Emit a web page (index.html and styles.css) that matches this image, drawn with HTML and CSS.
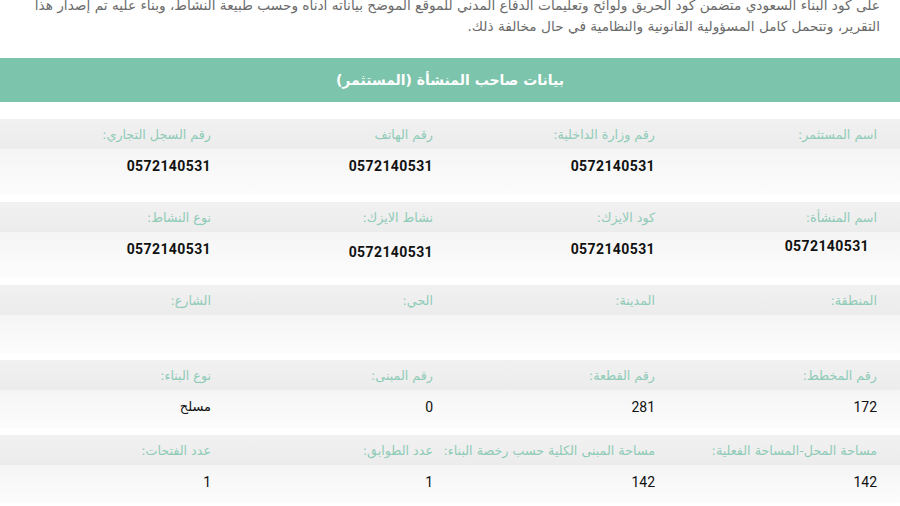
FILE: index.html
```html
<!DOCTYPE html>
<html lang="ar" dir="rtl">
<head>
<meta charset="utf-8">
<link rel="stylesheet" href="styles.css">
</head>
<body>
<div class="intro">
  <p class="line">على كود البناء السعودي متضمن كود الحريق ولوائح وتعليمات الدفاع المدني للموقع الموضح بياناته أدناه وحسب طبيعة النشاط، وبناء عليه تم إصدار هذا</p>
  <p class="line">التقرير، وتتحمل كامل المسؤولية القانونية والنظامية في حال مخالفة ذلك.</p>
</div>

<div class="section-title">بيانات صاحب المنشأة (المستثمر)</div>

<div class="group tall">
  <div class="labels">
    <span>اسم المستثمر:</span>
    <span>رقم وزارة الداخلية:</span>
    <span>رقم الهاتف</span>
    <span>رقم السجل التجاري:</span>
  </div>
  <div class="values bold">
    <span></span>
    <span>0572140531</span>
    <span>0572140531</span>
    <span>0572140531</span>
  </div>
</div>

<div class="group tall">
  <div class="labels">
    <span>اسم المنشأة:</span>
    <span>كود الايزك:</span>
    <span>نشاط الايزك:</span>
    <span>نوع النشاط:</span>
  </div>
  <div class="values bold">
    <span class="shift">0572140531</span>
    <span>0572140531</span>
    <span class="low">0572140531</span>
    <span>0572140531</span>
  </div>
</div>

<div class="group">
  <div class="labels">
    <span>المنطقة:</span>
    <span>المدينة:</span>
    <span>الحي:</span>
    <span>الشارع:</span>
  </div>
  <div class="values">
    <span></span><span></span><span></span><span></span>
  </div>
</div>

<div class="group">
  <div class="labels">
    <span>رقم المخطط:</span>
    <span>رقم القطعة:</span>
    <span>رقم المبنى:</span>
    <span>نوع البناء:</span>
  </div>
  <div class="values">
    <span>172</span>
    <span>281</span>
    <span>0</span>
    <span class="ar">مسلح</span>
  </div>
</div>

<div class="group">
  <div class="labels">
    <span>مساحة المحل-المساحة الفعلية:</span>
    <span>مساحة المبنى الكلية حسب رخصة البناء:</span>
    <span>عدد الطوابق:</span>
    <span>عدد الفتحات:</span>
  </div>
  <div class="values">
    <span>142</span>
    <span>142</span>
    <span>1</span>
    <span>1</span>
  </div>
</div>
</body>
</html>
```

FILE: styles.css
```css
html, body {
  margin: 0;
  padding: 0;
  background: #ffffff;
  width: 900px;
  height: 506px;
  overflow: hidden;
}

body {
  direction: rtl;
  font-family: "DejaVu Sans", "Noto Sans", sans-serif;
}

.intro {
  margin-top: -5px;
  padding: 0 20px 0 0;
  height: 63px;
}

.line {
  margin: 0;
  font-size: 13.7px;
  line-height: 21px;
  color: #6b6b6b;
  white-space: nowrap;
}

.section-title {
  background: #7cc4ab;
  color: #ffffff;
  height: 44px;
  line-height: 44px;
  text-align: center;
  font-size: 14px;
  font-weight: bold;
  margin-bottom: 17px;
}

.group {
  margin-bottom: 7px;
}

.labels,
.values {
  display: grid;
  grid-template-columns: repeat(4, 222px);
  padding-right: 23px;
}

.labels {
  height: 30px;
  align-items: center;
  background: linear-gradient(to bottom, #f1f1f1, #ececec);
}

.labels span {
  font-size: 12.7px;
  color: #8fcbb7;
  white-space: nowrap;
}

.values {
  height: 31px;
  padding-top: 7px;
  align-items: start;
  background: linear-gradient(to bottom, #f5f5f5, #fcfcfc);
}

.group.tall .values {
  height: 39px;
}

.values span {
  font-family: Roboto, "DejaVu Sans", sans-serif;
  font-size: 14px;
  line-height: 20px;
  color: #111111;
  direction: ltr;
  text-align: right;
}

.values.bold span {
  font-weight: bold;
  letter-spacing: 0.4px;
}

.values span.shift {
  padding-right: 8px;
  margin-top: -3px;
}

.values span.low {
  margin-top: 3px;
}

.values span.ar {
  font-family: "DejaVu Sans", sans-serif;
  font-size: 13px;
  direction: rtl;
}
```
